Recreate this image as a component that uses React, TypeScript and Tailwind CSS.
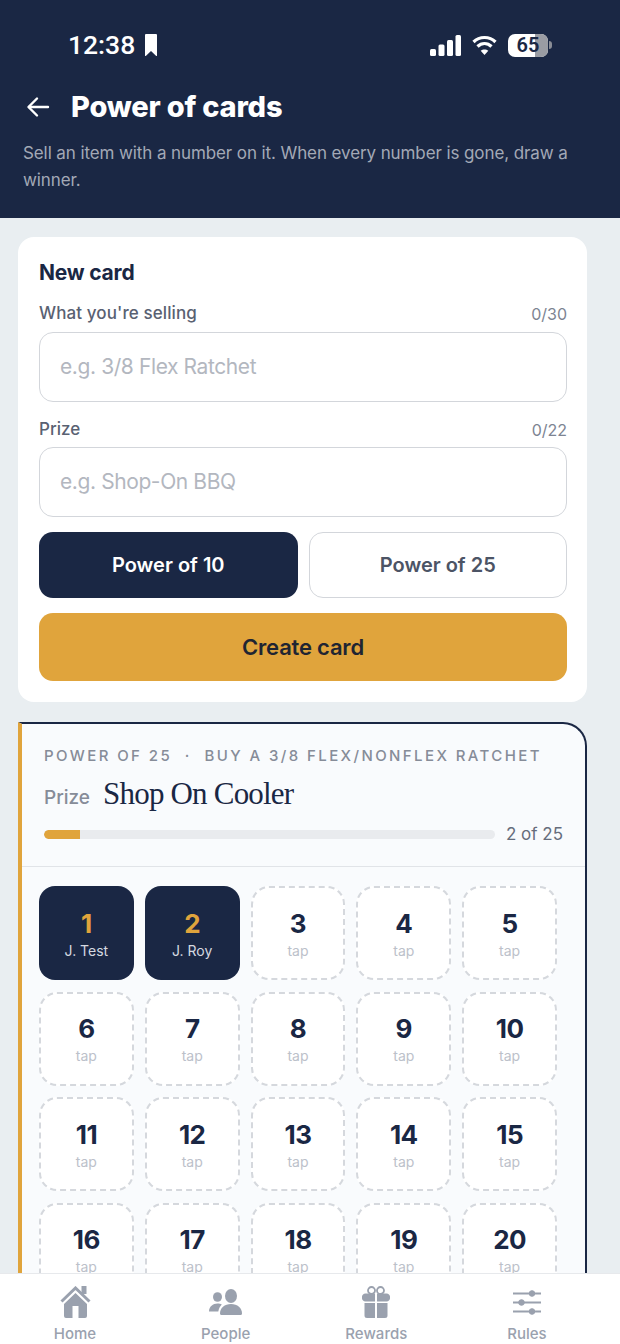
import React from "react";

const Tab = ({ label, children }: { label: string; children: React.ReactNode }) => (
  <div className="flex flex-col items-center w-[100px]">
    <div className="h-[36px] flex items-center justify-center">{children}</div>
    <span className="text-[15px] leading-[18px] font-medium text-[#9aa1ae] mt-[5px]">{label}</span>
  </div>
);

const Cell = ({ n, name }: { n: number; name?: string }) =>
  name ? (
    <div className="h-[94px] rounded-[16px] bg-[#1a2744] flex flex-col items-center justify-center pt-[2px]">
      <span className="text-[26px] leading-[32px] font-bold text-[#e0a43c] tracking-[-0.5px]">{n}</span>
      <span className="text-[14px] leading-[20px] mt-[1px] text-[#d5d9e0]">{name}</span>
    </div>
  ) : (
    <div className="h-[94px] rounded-[18px] border-2 border-dashed border-[#d5d8dd] bg-white flex flex-col items-center justify-center pt-[2px]">
      <span className="text-[26px] leading-[32px] font-bold text-[#1a2744] tracking-[-0.5px]">{n}</span>
      <span className="text-[14px] leading-[20px] mt-[1px] text-[#bcc1ca]">tap</span>
    </div>
  );

export default function App() {
  const cells = Array.from({ length: 20 }, (_, i) => i + 1);
  return (
    <div className="w-[620px] h-[1344px] flex flex-col overflow-hidden bg-[#e9eef1] font-['Inter',sans-serif]">
      <header className="h-[218px] shrink-0 bg-[#1a2744] px-[23px]">
        <div className="h-[88px] flex items-center justify-between pl-[45px] pr-[45px] pt-[2px]">
          <div className="flex items-center gap-[9px] text-white">
            <span className="text-[26.500px] leading-none font-medium font-['Roboto',sans-serif]">12:38</span>
            <svg width="14" height="24" viewBox="0 0 13 24" fill="white"><path d="M1.500 1h10a1 1 0 0 1 1 1v20.500a.5.5 0 0 1-.8.4L6.500 18l-5.200 4.900a.5.5 0 0 1-.8-.4V2a1 1 0 0 1 1-1z" /></svg>
          </div>
          <div className="flex items-center gap-[11px]">
            <svg width="31" height="21" viewBox="0 0 31 21" fill="white">
              <rect x="0" y="14" width="6" height="7" rx="1.500" />
              <rect x="8.500" y="9.500" width="6" height="11.500" rx="1.500" />
              <rect x="17" y="5" width="6" height="16" rx="1.500" />
              <rect x="25.500" y="0" width="5.500" height="21" rx="1.500" />
            </svg>
            <svg width="25" height="20" viewBox="0 0 25 20" fill="none" stroke="white" strokeWidth="3.200">
              <path d="M1.500 7C7.500 1 17.500 1 23.500 7" />
              <path d="M5.500 11.500C9.500 7.500 15.500 7.500 19.500 11.500" />
              <path d="M12.500 20l-3.800-4.300c2.100-1.700 5.500-1.700 7.600 0z" fill="white" stroke="none" />
            </svg>
            <div className="flex items-center">
              <div className="w-[40px] h-[23px] rounded-[7px] bg-white relative overflow-hidden flex items-center justify-center">
                <div className="absolute right-0 top-0 bottom-0 w-[13px] bg-[#9a9ca3]" />
                <span className="relative text-[20px] leading-none font-semibold text-[#1a2744] font-['Roboto',sans-serif]">65</span>
              </div>
              <div className="w-[3px] h-[8px] bg-[#8a8d96] rounded-r-sm ml-[1px]" />
            </div>
          </div>
        </div>
        <div className="flex items-center gap-[21px] h-[38px] pl-[3px]">
          <svg width="24" height="24" viewBox="0 0 24 24" fill="none" stroke="white" strokeWidth="2.400" strokeLinecap="round" strokeLinejoin="round">
            <path d="M22 12H3" />
            <path d="M11 3.500 2.500 12l8.500 8.500" />
          </svg>
          <h1 className="text-[29px] leading-[38px] font-extrabold text-white tracking-[-0.2px]">Power of cards</h1>
        </div>
        <p className="mt-[14px] text-[17px] leading-[27px] text-[#a3a9b6] tracking-[-0.1px] w-[560px]">
          Sell an item with a number on it. When every number is gone, draw a winner.
        </p>
      </header>

      <main className="flex-1 min-h-0 overflow-hidden pl-[18px] pr-[33px] pt-[19px]">
        <section className="h-[465px] rounded-[16px] bg-white pl-[21px] pr-[20px] pt-[22px]">
          <h2 className="text-[21px] leading-[28px] font-bold text-[#1a2744] tracking-[-0.2px]">New card</h2>
          <div className="mt-[16px] flex justify-between items-center h-[22px]">
            <span className="text-[17px] font-medium text-[#596172] tracking-[0.1px]">What you're selling</span>
            <span className="text-[16px] text-[#7d8492]">0/30</span>
          </div>
          <div className="mt-[7px] h-[70px] rounded-[14px] border-[1.5px] border-[#d3d6db] bg-white flex items-center px-[20px] text-[21px] tracking-[-0.4px] text-[#b3b7bf]">
            e.g. 3/8 Flex Ratchet
          </div>
          <div className="mt-[17px] flex justify-between items-center h-[22px]">
            <span className="text-[17px] font-medium text-[#596172]">Prize</span>
            <span className="text-[16px] text-[#7d8492]">0/22</span>
          </div>
          <div className="mt-[6px] h-[70px] rounded-[14px] border-[1.5px] border-[#d3d6db] bg-white flex items-center px-[20px] text-[21px] tracking-[-0.4px] text-[#b3b7bf]">
            e.g. Shop-On BBQ
          </div>
          <div className="mt-[15px] grid grid-cols-2 gap-[11px]">
            <div className="h-[66px] rounded-[14px] bg-[#1a2744] flex items-center justify-center text-[20px] font-semibold text-white">Power of 10</div>
            <div className="h-[66px] rounded-[14px] border-[1.5px] border-[#d3d6db] bg-white flex items-center justify-center text-[20px] font-semibold text-[#4c5465]">Power of 25</div>
          </div>
          <div className="mt-[15px] h-[68px] rounded-[14px] bg-[#e0a43c] flex items-center justify-center text-[22px] font-semibold tracking-[-0.2px] text-[#1f2532]">Create card</div>
        </section>

        <section className="mt-[20px] rounded-tr-[24px] border-t-2 border-r-2 border-[#1a2744] border-l-[4px] border-l-[#e0a43c] bg-[#f9fbfd] pb-[10px]">
          <div className="pl-[22px] pr-[22px] pt-[21px] pb-[20px]">
            <div className="text-[15px] leading-[22px] font-medium tracking-[2.400px] text-[#868c98] whitespace-nowrap">POWER OF 25 &nbsp;·&nbsp; BUY A 3/8 FLEX/NONFLEX RATCHET</div>
            <div className="mt-[6px] flex items-baseline gap-[13px] h-[42px]">
              <span className="text-[19px] font-medium text-[#868c98]">Prize</span>
              <span className="text-[31px] leading-[42px] tracking-[-0.8px] text-[#1a2744] font-['Liberation_Serif',serif]">Shop On Cooler</span>
            </div>
            <div className="mt-[7px] flex items-center gap-[11px]">
              <div className="flex-1 h-[9px] rounded-full bg-[#e9ebee] overflow-hidden">
                <div className="h-full w-[8%] bg-[#e0a43c] rounded-l-full" />
              </div>
              <span className="text-[17px] leading-[24px] text-[#666d7c]">2 of 25</span>
            </div>
          </div>
          <div className="border-t border-[#e1e4e8] pl-[17px] pr-[28px] pt-[19px] grid grid-cols-5 gap-x-[11px] gap-y-[11.500px]">
            {cells.map((n) => (
              <Cell key={n} n={n} name={n === 1 ? "J. Test" : n === 2 ? "J. Roy" : undefined} />
            ))}
          </div>
        </section>
      </main>

      <nav className="h-[71px] shrink-0 bg-white border-t border-[#e7e9ec] flex justify-between items-start pl-[25px] pr-[43px] pt-[10px]">
        <Tab label="Home">
          <svg width="31" height="32" viewBox="0 0 31 32" fill="#9aa1ae">
            <rect x="21.500" y="0" width="5" height="8" />
            <path d="M1.500 15.500 15.500 2l14 13.500" fill="none" stroke="#9aa1ae" strokeWidth="3" />
            <path d="M15.500 7 27 18v12a2 2 0 0 1-2 2h-6.500V20h-6v12H6a2 2 0 0 1-2-2V18z" />
          </svg>
        </Tab>
        <Tab label="People">
          <svg width="33" height="26" viewBox="0 0 33 26" fill="#9aa1ae">
            <ellipse cx="8.500" cy="8" rx="4.500" ry="4.800" />
            <ellipse cx="22" cy="7" rx="6" ry="7" />
            <path d="M0 22.500c0-5 4-8 8.500-8 1.700 0 3 .3 4.300 1-1.700 1.800-3 4-3.500 7z" />
            <path d="M12.500 26c-1 0-1.500-.7-1.500-1.500C11 19 15.500 15 22 15s11 4 11 9.500c0 .8-.5 1.500-1.500 1.500z" />
          </svg>
        </Tab>
        <Tab label="Rewards">
          <svg width="28" height="32" viewBox="0 0 28 32" fill="#9aa1ae">
            <circle cx="9.500" cy="4.500" r="3.500" fill="none" stroke="#9aa1ae" strokeWidth="1.800" />
            <circle cx="18.500" cy="4.500" r="3.500" fill="none" stroke="#9aa1ae" strokeWidth="1.800" />
            <path d="M3.500 7.500H13v8H3.500a3.500 3.500 0 0 1-3.500-4 3.500 3.500 0 0 1 3.500-4zM15 7.500h9.500a3.500 3.500 0 0 1 3.500 4 3.500 3.500 0 0 1-3.500 4H15z" />
            <path d="M2.500 17H13v15H5a2.500 2.500 0 0 1-2.500-2.500zM15 17h10.500v12.500A2.500 2.500 0 0 1 23 32h-8z" />
          </svg>
        </Tab>
        <Tab label="Rules">
          <svg width="28" height="25" viewBox="0 0 28 25" fill="#9aa1ae" stroke="#9aa1ae">
            <path d="M0 3.500h28M0 12.500h28M0 21.500h28" strokeWidth="1.800" />
            <circle cx="19" cy="3.500" r="2.800" />
            <circle cx="8.500" cy="12.500" r="2.800" />
            <circle cx="19" cy="21.500" r="2.800" />
          </svg>
        </Tab>
      </nav>
    </div>
  );
}
